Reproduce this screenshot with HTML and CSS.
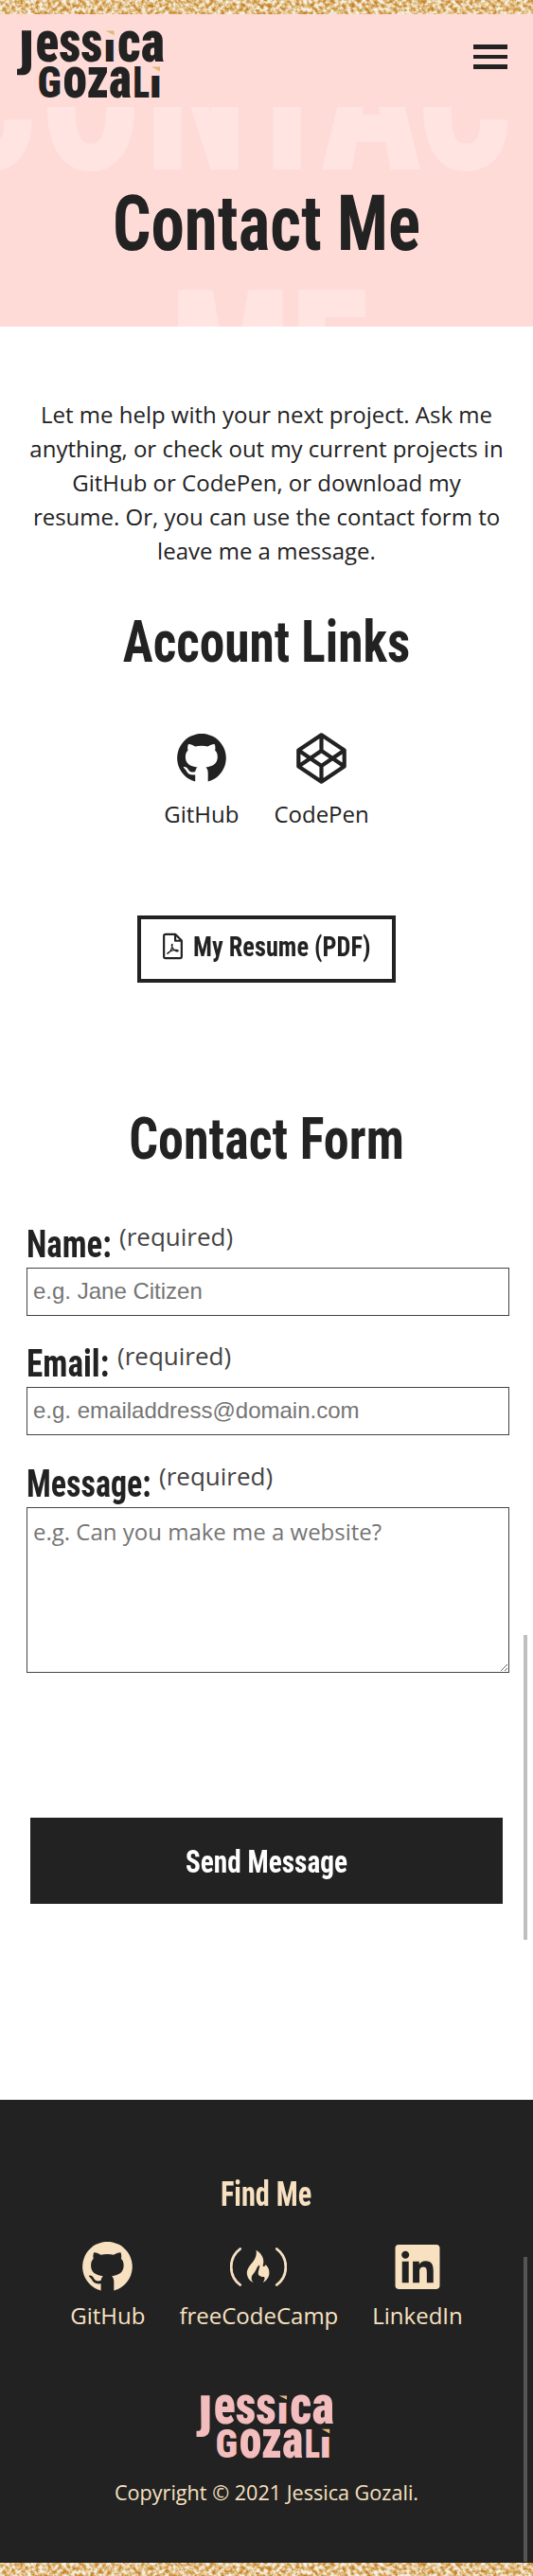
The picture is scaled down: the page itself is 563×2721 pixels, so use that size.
FILE: index.html
```html
<!DOCTYPE html>
<html lang="en">
<head>
<meta charset="utf-8">
<title>Contact Me | Jessica Gozali</title>
<link rel="stylesheet" href="styles.css">
</head>
<body>
<svg class="defs" aria-hidden="true">
  <filter id="glitter" x="0" y="0" width="100%" height="100%" color-interpolation-filters="sRGB">
    <feTurbulence type="fractalNoise" baseFrequency="0.24" numOctaves="3" seed="7"/>
    <feColorMatrix values="1.9 0 0 0 -0.42  1.9 0 0 0 -0.42  1.9 0 0 0 -0.42  0 0 0 0 1"/>
    <feComponentTransfer>
      <feFuncR type="table" tableValues="0.76 0.82 0.88 0.95 0.96"/>
      <feFuncG type="table" tableValues="0.50 0.60 0.74 0.89 0.96"/>
      <feFuncB type="table" tableValues="0.18 0.29 0.50 0.79 0.94"/>
    </feComponentTransfer>
  </filter>
  <symbol id="logo" viewBox="0 0 155 73" overflow="visible">
    <g fill="currentColor">
      <path d="M5 1.300H15V38C15 45 11.500 48.300 5 48.300H0V41.700C4 41.900 5.300 40.700 5.300 37Z"/>
      <g class="glyph">
        <text x="19.500" y="33.700" font-size="61" textLength="71" lengthAdjust="spacingAndGlyphs">ess</text>
        <text x="91" y="33.700" font-size="43" textLength="13.500" lengthAdjust="spacingAndGlyphs">ı</text>
        <text x="106" y="33.700" font-size="61" textLength="50" lengthAdjust="spacingAndGlyphs">ca</text>
        <text x="21.500" y="71.800" font-size="46" textLength="25.500" lengthAdjust="spacingAndGlyphs">G</text>
        <text x="48.500" y="71.800" font-size="61" textLength="72.500" lengthAdjust="spacingAndGlyphs">oza</text>
        <text x="122.500" y="71.800" font-size="46" textLength="17.500" lengthAdjust="spacingAndGlyphs">L</text>
        <text x="139.500" y="71.800" font-size="43" textLength="13.500" lengthAdjust="spacingAndGlyphs">ı</text>
      </g>
    </g>
    <path class="accent" d="M93.500 1.500H102.500V6.300ZM142 39.500H151V44.500Z"/>
  </symbol>
  <symbol id="github" viewBox="0 0 52 51">
    <path d="M32.700 50.600A25.800 25.800 0 1 0 19.200 50.600V43.400C14 44 11.500 42.600 10 39.500C9 37.500 7.500 36.500 6.600 35.200C8.500 34.300 10.500 35.400 12 38C13.800 41 16.500 41 19.300 40C19.500 38 20.300 36.500 21.500 35.500C13.500 34.500 8.900 31.500 8.900 24.500C8.900 21.500 9.800 19.300 11.500 17.500C11 15.500 11 13.300 12 11C14.500 10.900 16.700 12.100 19 13.600C23.500 12.600 28.500 12.600 32.500 13.600C35 12.100 37.300 10.900 39.700 11C40.600 13.300 40.600 15.500 40.100 17.500C42 19.300 42.800 21.500 42.800 24.500C42.800 31.500 38 34.500 30.500 35.500C32 36.800 32.700 39 32.700 41.500Z"/>
  </symbol>
  <symbol id="codepen" viewBox="0 0 53 54">
    <path fill="none" stroke="currentColor" stroke-width="4.200" stroke-linejoin="round" d="M26.500 2.300L50.700 18.500V35.500L26.500 51.700L2.300 35.500V18.500ZM26.500 2.300V19M26.500 35V51.700M2.300 18.500L26.500 35L50.700 18.500M2.300 35.500L26.500 19L50.700 35.500"/>
  </symbol>
  <symbol id="freecodecamp" viewBox="0 0 60 41">
    <path fill="none" stroke="currentColor" stroke-width="2.800" stroke-linecap="round" d="M10.700 1.500C-2 11-2 30 10.700 39.500M49.300 1.500C62 11 62 30 49.300 39.500"/>
    <path d="M27.600 2.700C33.500 6.200 36.800 12.500 34.800 18.500C34.200 20.600 36.600 20.800 37.300 18.200C40.500 20.200 41.600 24 41.400 27.500C41.200 31.500 38.500 35.200 34.500 37.200C36.300 34.600 37.200 32.800 36 31C34.600 31.400 30 30.500 29.700 27.500C29.500 24.500 31.500 22 31.200 18.500C29.500 18.800 28.200 21.500 27.200 24C25.500 27.500 23.200 28.500 22.700 31.500C22.400 34 23.300 35.800 24.800 37.200C20.500 35.500 17.700 31.200 17.800 26.600C18 21 23.500 16.800 26 12.200C27.600 9 28.200 6 27.600 2.700Z"/>
  </symbol>
  <symbol id="linkedin" viewBox="0 32 448 448">
    <path d="M416 32H31.900C14.300 32 0 46.500 0 64.300v383.400C0 465.500 14.300 480 31.900 480H416c17.600 0 32-14.500 32-32.300V64.300c0-17.800-14.400-32.300-32-32.300zM135.400 416H69V202.200h66.500V416zm-33.200-243c-21.300 0-38.500-17.300-38.500-38.500S80.900 96 102.200 96c21.200 0 38.500 17.300 38.500 38.500 0 21.300-17.200 38.500-38.500 38.500zm282.100 243h-66.400V312c0-24.800-.5-56.700-34.500-56.700-34.600 0-39.900 27-39.900 54.900V416h-66.400V202.200h63.700v29.200h.9c8.900-16.800 30.600-34.500 62.200-34.500 66.500 0 79.900 43.800 79.900 100.900V416z"/>
  </symbol>
  <symbol id="pdf" viewBox="0 0 22 29">
    <g fill="none" stroke="currentColor" stroke-linejoin="round">
      <path stroke-width="2.300" d="M14 1.300H3A1.800 1.800 0 0 0 1.200 3V26A1.800 1.800 0 0 0 3 27.700H19A1.800 1.800 0 0 0 20.800 26V8.300ZM13.700 1.500V8.500H20.600"/>
      <path stroke-width="1.300" d="M5.200 22.800C8 21.500 10.600 16.500 10.500 12.300C9.300 12 9.400 16.200 13 19C14.500 20.200 16.800 20.500 17 19.500C17 18.200 12 18.200 7.500 20.500C5.500 21.500 4.700 22.600 5.200 22.800Z"/>
    </g>
  </symbol>
</svg>

<svg class="glitter glitter-top" aria-hidden="true"><rect width="100%" height="100%" filter="url(#glitter)"/></svg>

<div class="hero">
  <svg class="ghost" viewBox="0 15 563 330" aria-hidden="true">
    <text transform="scale(.8 1)" x="-77.500 54 192.500 319 424 551 678" y="178.500">CONTACT</text>
    <text x="180" y="461" textLength="209" lengthAdjust="spacingAndGlyphs">ME</text>
  </svg>
  <header class="topbar">
    <svg class="logo" role="img" aria-label="Jessica Gozali"><use href="#logo"/></svg>
    <button class="menu" aria-label="Menu"><i></i><i></i><i></i></button>
  </header>
  <h1>Contact Me</h1>
</div>

<main>
  <p class="intro">Let me help with your next project. Ask me anything, or check out my current projects in GitHub or CodePen, or download my resume. Or, you can use the contact form to leave me a message.</p>
  <h2>Account Links</h2>
  <div class="links">
    <a class="link"><svg class="ic-github"><use href="#github"/></svg><span>GitHub</span></a>
    <a class="link"><svg class="ic-codepen"><use href="#codepen"/></svg><span>CodePen</span></a>
  </div>
  <a class="resume"><svg><use href="#pdf"/></svg><span>My Resume (PDF)</span></a>

  <h2 class="form-title">Contact Form</h2>
  <form>
    <label class="name"><b><span>Name:</span></b><em>(required)</em></label>
    <input type="text" placeholder="e.g. Jane Citizen">
    <label class="email"><b><span>Email:</span></b><em>(required)</em></label>
    <input type="email" placeholder="e.g. emailaddress@domain.com">
    <label class="message"><b><span>Message:</span></b><em>(required)</em></label>
    <textarea placeholder="e.g. Can you make me a website?"></textarea>
    <button class="send" type="button"><span>Send Message</span></button>
  </form>
</main>

<footer>
  <h3>Find Me</h3>
  <div class="links">
    <a class="link"><svg class="ic-github"><use href="#github"/></svg><span>GitHub</span></a>
    <a class="link"><svg class="ic-fcc"><use href="#freecodecamp"/></svg><span>freeCodeCamp</span></a>
    <a class="link"><svg class="ic-linkedin"><use href="#linkedin"/></svg><span>LinkedIn</span></a>
  </div>
  <svg class="logo" role="img" aria-label="Jessica Gozali"><use href="#logo"/></svg>
  <p class="copyright">Copyright © 2021 Jessica Gozali.</p>
</footer>
<svg class="glitter" aria-hidden="true"><rect width="100%" height="100%" filter="url(#glitter)"/></svg>
<div class="bar bar-light"></div>
<div class="bar bar-dark"></div>
</body>
</html>
```
FILE: styles.css
```css
* { box-sizing: border-box; }
body {
  position: relative;
  margin: 0;
  width: 563px;
  height: 2721px;
  overflow: hidden;
  background: #fff;
  color: #222;
  font: 400 24px/36px "Open Sans", sans-serif;
}
h1, h2, h3, p { margin: 0; }
svg { display: block; fill: currentColor; }
.defs { position: absolute; width: 0; height: 0; }
.glitter { width: 563px; height: 14px; }
.glitter-top { height: 15px; }

h1, h2, h3, .resume span, label b, .send span {
  font-family: "Roboto Condensed", Roboto, sans-serif;
  font-stretch: 75%;
  font-weight: 700;
  white-space: nowrap;
}

.hero { position: relative; height: 330px; background: #ffdbd7; overflow: hidden; }
.ghost { position: absolute; top: 0; left: 0; width: 563px; height: 330px; }
.ghost text {
  font: 900 218px "Roboto Condensed", Roboto, sans-serif;
  fill: #ffe4e1;
}
.topbar {
  position: relative;
  display: flex;
  justify-content: space-between;
  align-items: flex-start;
  height: 98px;
  padding: 16px 27px 0 18px;
  background: #ffdbd7;
}
.logo { width: 155px; height: 73px; overflow: visible; }
.glyph { font-family: "Roboto Condensed", Roboto, sans-serif; font-weight: 900; }
.accent { fill: #e0b775; }
.menu {
  display: flex;
  flex-direction: column;
  gap: 6px;
  margin-top: 16px;
  padding: 0;
  border: 0;
  background: none;
}
.menu i { width: 36px; height: 4.500px; background: #222; }
h1 {
  position: relative;
  margin-top: 74px;
  text-align: center;
  font-size: 81px;
  line-height: 100px;
  transform: scaleX(.878);
}

.intro { padding: 75px 29px 33px; text-align: center; }
h2 { text-align: center; font-size: 62px; line-height: 90px; transform: scaleX(.86); }
.form-title { transform: scaleX(.873); }
.links { display: flex; justify-content: center; gap: 37px; }
main .links { margin-top: 51px; }
.link { display: flex; flex-direction: column; align-items: center; justify-content: space-between; height: 104px; }
.ic-github { width: 52px; height: 51px; margin-top: 1px; }
.ic-codepen { width: 53px; height: 54px; }
.resume {
  display: flex;
  width: 273px;
  height: 71px;
  margin: 89px auto 120px 145px;
  padding: 11px 0 0 23px;
  border: 4px solid #222;
}
.resume svg { width: 22px; height: 29px; margin: 3px 11px 0 0; }
.resume span { font-size: 29.500px; transform: scaleX(.893); transform-origin: left; }

form { display: flex; flex-direction: column; padding: 43px 25px 0 28px; }
label { display: flex; align-items: flex-start; height: 48px; }
label b { width: 98px; font-size: 40px; line-height: 48px; }
label b span { display: inline-block; transform: scaleX(.87); transform-origin: left; }
label em { margin-top: -3px; font-size: 26px; font-style: normal; color: #444; }
.email b { width: 96px; }
.email b span { transform: scaleX(.88); }
.message b { width: 140px; }
.message b span { transform: scaleX(.85); }
input, textarea {
  width: 510px;
  margin: 0 0 27px;
  padding: 0 6px;
  border: 1px solid #444;
  border-radius: 0;
  background: #fff;
}
input { height: 51px; padding-bottom: 1px; font: 24px "Liberation Sans", Arial, sans-serif; }
input[type="email"] { margin-bottom: 28px; }
textarea { height: 175px; margin-bottom: 153px; padding-top: 8px; font: 24px/33px "Open Sans", sans-serif; }
::placeholder { color: #757575; }
.send {
  width: 499px;
  height: 91px;
  margin-left: 4px;
  padding: 1px 0 0;
  border: 0;
  background: #222;
  color: #fff;
}
.send span { display: block; font-size: 34px; line-height: 50px; transform: scaleX(.862); }

footer {
  display: flex;
  flex-direction: column;
  align-items: center;
  height: 489px;
  margin-top: 207px;
  padding-top: 75px;
  background: #222;
  color: #f7e1c1;
}
h3 { font-size: 36.500px; line-height: 50px; transform: scaleX(.83); }
footer .links { gap: 36px; margin-top: 24px; }
footer .link { height: 97px; }
footer .ic-github { width: 53px; height: 52px; margin-top: 1px; }
.ic-fcc { width: 60px; height: 41px; margin-top: 7px; }
.ic-linkedin { width: 48px; height: 47px; margin-top: 4px; }
footer .logo { width: 145.500px; height: 68px; margin: 65px 0 0 -3px; color: #f3bdbd; }
.copyright { margin-top: 20px; font-size: 21.600px; line-height: 32px; }

.bar { position: absolute; left: 553px; width: 4px; }
.bar-light { top: 1727px; height: 322px; background: #bfbfbf; }
.bar-dark { top: 2384px; height: 322px; background: #555; }
```
